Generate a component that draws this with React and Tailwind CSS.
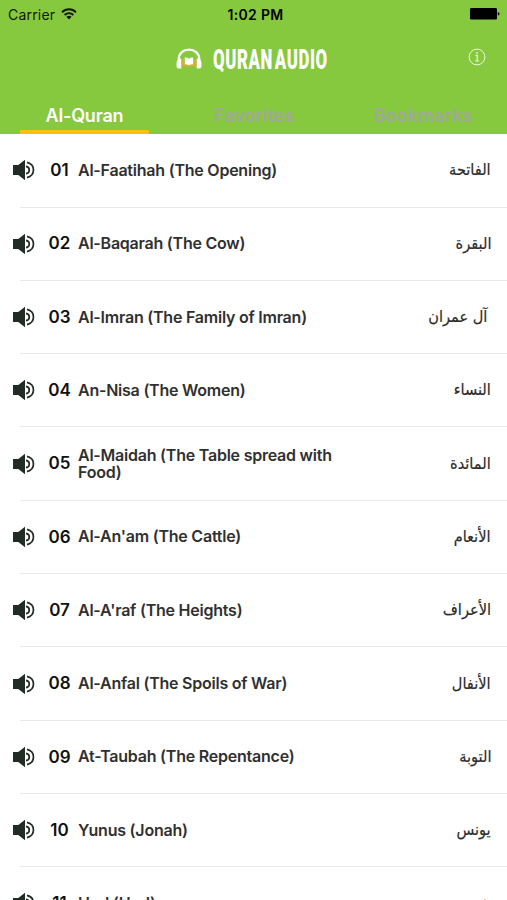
import { Fragment } from 'react'

const surahs = [
  { number: '01', name: 'Al-Faatihah (The Opening)', arabic: 'الفاتحة' },
  { number: '02', name: 'Al-Baqarah (The Cow)', arabic: 'البقرة' },
  { number: '03', name: 'Al-Imran (The Family of Imran)', arabic: 'آل عمران', inset: true },
  { number: '04', name: 'An-Nisa (The Women)', arabic: 'النساء' },
  { number: '05', name: 'Al-Maidah (The Table spread with Food)', arabic: 'المائدة' },
  { number: '06', name: "Al-An'am (The Cattle)", arabic: 'الأنعام' },
  { number: '07', name: "Al-A'raf (The Heights)", arabic: 'الأعراف' },
  { number: '08', name: 'Al-Anfal (The Spoils of War)', arabic: 'الأنفال' },
  { number: '09', name: 'At-Taubah (The Repentance)', arabic: 'التوبة' },
  { number: '10', name: 'Yunus (Jonah)', arabic: 'يونس' },
  { number: '11', name: 'Hud (Hud)', arabic: 'هود' },
]

const WifiIcon = () => (
  <svg width="16" height="12" viewBox="0 0 16 12" fill="none" stroke="#10180a" strokeWidth="1.9">
    <path d="M1 4.3C5 .3 11 .3 15 4.3" />
    <path d="M3.6 7C6.2 4.5 9.8 4.5 12.4 7" />
    <path d="M5.4 8.8Q8 6.6 10.6 8.8L8 11.5Z" fill="#10180a" stroke="none" />
  </svg>
)

const BatteryIcon = () => (
  <svg width="30" height="12" viewBox="0 0 30 12">
    <rect width="27" height="11.5" rx="1.3" />
    <path d="M27.8 4Q29.5 4.4 29.5 5.8T27.8 7.6Z" />
  </svg>
)

const LogoIcon = () => (
  <svg width="26" height="22" viewBox="0 0 26 22" fill="none">
    <path d="M2.8 13V11C2.8 5 7.4 1.6 13 1.6S23.2 5 23.2 11V13" stroke="white" strokeWidth="2.3" />
    <path d="M5.3 10.8V20.6H3Q.5 20.6 .5 17.5V15Q.5 12 3 10.8Z" fill="white" />
    <path d="M20.7 10.8V20.6H23Q25.5 20.6 25.5 17.5V15Q25.5 12 23 10.8Z" fill="white" />
    <path d="M6.8 11V17.2H12.2L13 17.8L13.8 17.2H19.2V11" stroke="#d8b030" strokeWidth="2.2" />
    <path d="M8.8 9.5Q11.3 9.2 13 10.8Q14.7 9.2 17.2 9.5V16.2Q14.7 16.1 13 17.2Q11.3 16.1 8.8 16.2Z" fill="white" />
  </svg>
)

const InfoIcon = () => (
  <svg width="18" height="18" viewBox="0 0 18 18" fill="none" stroke="#edf8df">
    <circle cx="9" cy="9" r="7.9" strokeWidth="1" />
    <path d="M7.4 7.4H9.2V13M7.2 13H11" strokeWidth="1.2" />
    <circle cx="9" cy="4.8" r=".9" fill="#edf8df" stroke="none" />
  </svg>
)

const SpeakerIcon = () => (
  <svg width="22" height="22" viewBox="0 0 22 22" fill="none" stroke="#202c25">
    <path d="M0 6H5.3L12 .8V21.2L5.3 16H0Z" fill="#202c25" stroke="none" />
    <path d="M13 7.3C17.4 8 17.4 14 13 14.7" strokeWidth="1.7" />
    <path d="M14 3.4C22.6 5.4 22.6 16.6 14 18.6" strokeWidth="1.7" />
  </svg>
)

const Header = () => (
  <header className="h-[134px] bg-[#86c83e]">
    <div className="grid h-7 grid-cols-3 items-center pr-[7px] pl-2 text-[14px] text-[#10180a]">
      <div className="flex items-center gap-[6px]">
        <span className="tracking-[0.2px]">Carrier</span>
        <WifiIcon />
      </div>
      <span className="pl-[3px] text-center font-semibold tracking-[0.3px] text-black">1:02 PM</span>
      <div className="flex justify-end">
        <BatteryIcon />
      </div>
    </div>

    <div className="flex h-[62px] items-center pr-[21px] pl-44">
      <LogoIcon />
      <h1 className="ml-[11px] flex h-8 w-[117px] origin-left scale-x-[0.6] items-center gap-[3px] pt-0.5 font-['Roboto'] text-[28px] leading-8 font-black tracking-[1px] text-white">
        <span>QURAN</span>
        <span>AUDIO</span>
      </h1>
      <div className="mb-1 ml-auto">
        <InfoIcon />
      </div>
    </div>

    <nav className="grid h-11 grid-cols-3 text-center text-[18px] font-semibold text-[#a0a898]">
      <div className="ml-5 w-[129px] border-b-4 border-[#fdc010] pt-3 tracking-[-0.2px] text-white">Al-Quran</div>
      <div className="pt-3 pl-px">Favorites</div>
      <div className="pt-3 pl-px">Bookmarks</div>
    </nav>
  </header>
)

const SurahRow = ({ number, name, arabic, inset }) => (
  <li className="flex h-[72.3px] items-center pr-4 pl-[13px]">
    <SpeakerIcon />
    <span className="ml-[11px] w-[27px] pt-px text-center text-[17px] font-semibold text-[#111]">{number}</span>
    <span className="ml-[5px] w-[270px] text-[16px] leading-[17px] font-semibold tracking-[-0.23px] text-[#303030]">
      {name}
    </span>
    <span
      dir="rtl"
      lang="ar"
      className={`ml-auto origin-right scale-x-[0.91] font-['DejaVu_Sans',sans-serif] text-[16px] whitespace-nowrap text-[#2b2b2b] [-webkit-text-stroke:0.2px_#2b2b2b] ${inset ? 'pr-1' : ''}`}
    >
      {arabic}
    </span>
  </li>
)

export default function App() {
  return (
    <div className="h-[900px] w-[507px] overflow-hidden bg-white font-['Inter',sans-serif]">
      <Header />
      <ul className="pt-[0.3px]">
        {surahs.map((surah) => (
          <Fragment key={surah.number}>
            <SurahRow {...surah} />
            <li aria-hidden="true" className="ml-5 h-px bg-[#e9e9e9]" />
          </Fragment>
        ))}
      </ul>
    </div>
  )
}
